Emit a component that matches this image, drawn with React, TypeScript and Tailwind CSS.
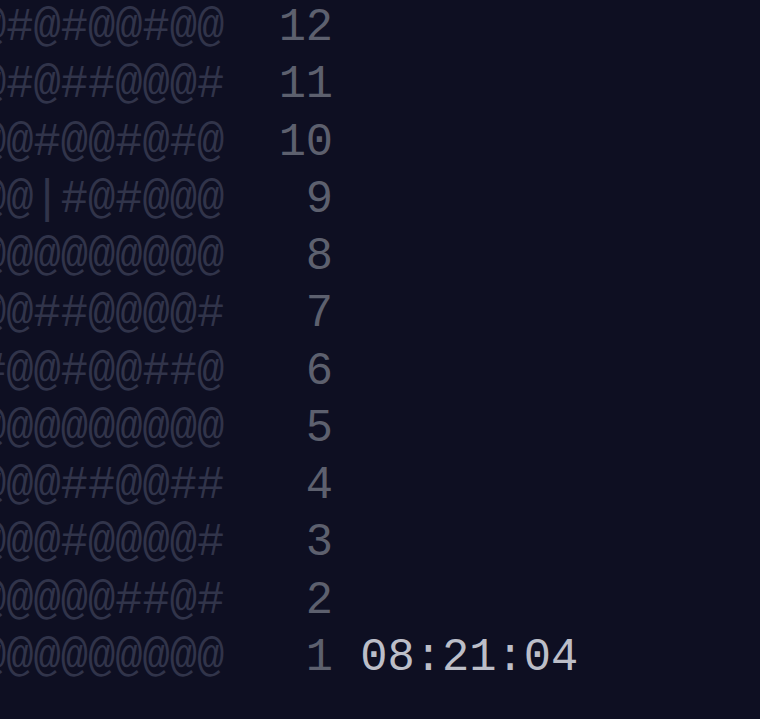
import React from 'react'

const rows = [
  '@#@#@@#@@',
  '@#@##@@@#',
  '@@#@@#@#@',
  '@@|#@#@@@',
  '@@@@@@@@@',
  '@@##@@@@#',
  '#@@#@@##@',
  '@@@@@@@@@',
  '@@@##@@##',
  '@@@#@@@@#',
  '@@@@@##@#',
  '@@@@@@@@@',
]

const App = () => {
  return (
    <main className='w-[760px] h-[719px] overflow-hidden bg-[#0e0f22]'>
      <div className='flex flex-col ml-[-21px] font-["Liberation_Mono",monospace] text-[45.4px] leading-[57.27px] whitespace-pre'>
        {rows.map((r, i) => {
          const n = rows.length - i
          return (
            <div key={i} className='flex'>
              <span className='text-[#31344a]'>{r}</span>
              <span className='text-[#5d606e]'>{'  ' + String(n).padStart(2, ' ')}</span>
              {n === 1 && <span className='text-[#bcbec8]'>{' 08:21:04'}</span>}
            </div>
          )
        })}
      </div>
    </main>
  )
}

export default App
